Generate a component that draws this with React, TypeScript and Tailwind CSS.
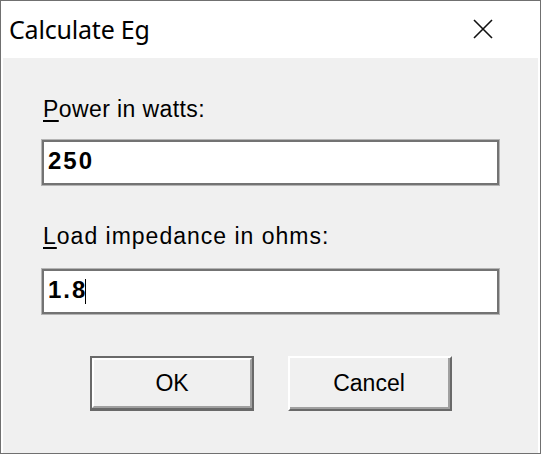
import React from "react";

const sans = { fontFamily: '"Liberation Sans", Arial, sans-serif' };

function Field({ value, caret }: { value: string; caret?: boolean }) {
  return (
    <div className="ml-[39px] w-[457px] h-[45px] border-2 border-[#737373] shadow-[0_0_0_1px_#b4b4b4] bg-white flex items-center pl-[4px] pb-[3px]">
      <span className="text-[24px] leading-[28px] font-bold tracking-[2px] text-black" style={sans}>
        {value}
      </span>
      {caret && <span className="w-[1px] h-[25px] bg-black ml-[-2px] mt-[3px]" />}
    </div>
  );
}

export default function App() {
  return (
    <div className="w-[541px] h-[454px] border border-[#707070] bg-white flex flex-col overflow-hidden">
      <div className="h-[57px] flex items-center justify-between pl-[8px] pr-[46px] shrink-0">
        <span
          className="text-[25px] leading-[30px] text-black pb-[2px] tracking-[-0.2px]"
          style={{ fontFamily: '"Noto Sans", "Open Sans", sans-serif' }}
        >
          Calculate Eg
        </span>
        <svg width="20" height="20" viewBox="0 0 20 20" className="mt-[-2px] mr-[1px]">
          <path d="M1 1 L19 19 M19 1 L1 19" stroke="#111" strokeWidth="1.6" fill="none" />
        </svg>
      </div>
      <div className="flex-1 mx-[2px] bg-[#f0f0f0] flex flex-col pt-[37px]" style={sans}>
        <div className="pl-[40px] text-[23px] leading-[28px] text-black tracking-[0.4px]">
          <span className="underline underline-offset-[3px]">P</span>ower in watts:
        </div>
        <div className="mt-[17px]">
          <Field value="250" />
        </div>
        <div className="pl-[40px] mt-[37px] text-[23px] leading-[28px] text-black tracking-[1px]">
          <span className="underline underline-offset-[3px]">L</span>oad impedance in ohms:
        </div>
        <div className="mt-[19px]">
          <Field value="1.8" caret />
        </div>
        <div className="mt-[42px] flex justify-center gap-[34px] pl-[1px]">
          <button className="w-[164px] h-[55px] border-2 border-[#696969] border-b-[3px] bg-[#f0f0f0] flex p-0">
            <div className="flex-1 border-t-2 border-l-2 border-white border-b-2 border-r-2 border-b-[#a0a0a0] border-r-[#a0a0a0] flex items-center justify-center pb-[1px]">
              <span className="text-[23px] leading-[28px] text-black">OK</span>
            </div>
          </button>
          <button className="w-[164px] h-[55px] border-t-2 border-l-2 border-white border-b-2 border-r-2 border-b-[#696969] border-r-[#696969] bg-[#f0f0f0] flex p-0">
            <div className="flex-1 border-b-2 border-r-2 border-[#a0a0a0] border-t-0 border-l-0 flex items-center justify-center">
              <span className="text-[23px] leading-[28px] text-black">Cancel</span>
            </div>
          </button>
        </div>
      </div>
    </div>
  );
}
